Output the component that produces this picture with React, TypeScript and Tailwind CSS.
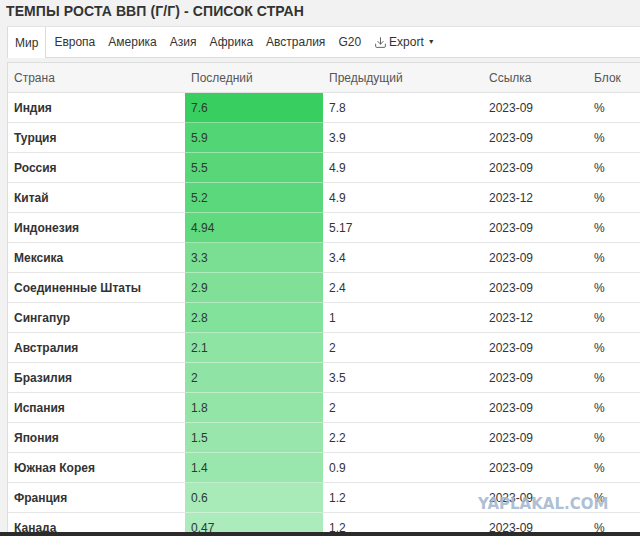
import { Download } from "lucide-react";

const rows = [
  { name: "Индия", last: "7.6", prev: "7.8", ref: "2023-09" },
  { name: "Турция", last: "5.9", prev: "3.9", ref: "2023-09" },
  { name: "Россия", last: "5.5", prev: "4.9", ref: "2023-09" },
  { name: "Китай", last: "5.2", prev: "4.9", ref: "2023-12" },
  { name: "Индонезия", last: "4.94", prev: "5.17", ref: "2023-09" },
  { name: "Мексика", last: "3.3", prev: "3.4", ref: "2023-09" },
  { name: "Соединенные Штаты", last: "2.9", prev: "2.4", ref: "2023-09" },
  { name: "Сингапур", last: "2.8", prev: "1", ref: "2023-12" },
  { name: "Австралия", last: "2.1", prev: "2", ref: "2023-09" },
  { name: "Бразилия", last: "2", prev: "3.5", ref: "2023-09" },
  { name: "Испания", last: "1.8", prev: "2", ref: "2023-09" },
  { name: "Япония", last: "1.5", prev: "2.2", ref: "2023-09" },
  { name: "Южная Корея", last: "1.4", prev: "0.9", ref: "2023-09" },
  { name: "Франция", last: "0.6", prev: "1.2", ref: "2023-09" },
  { name: "Канада", last: "0.47", prev: "1.2", ref: "2023-09" },
];

const tabs = ["Мир", "Европа", "Америка", "Азия", "Африка", "Австралия", "G20"];

// heat colour for the "last" column, light -> strong green
const heat = (v: number) => {
  const t = Math.min(v / 7.6, 1);
  const light = [184, 238, 197];
  const dark = [57, 207, 96];
  const c = light.map((l, i) => Math.round(l + (dark[i] - l) * Math.pow(t, 0.85)));
  return `rgb(${c[0]}, ${c[1]}, ${c[2]})`;
};

export default function App() {
  return (
    <div
      className="relative h-[536px] w-[640px] overflow-hidden bg-[#f2f2f2] flex flex-col text-[#333]"
      style={{ fontFamily: '"Liberation Sans", Arial, sans-serif' }}
    >
      <h1 className="px-[6px] pt-[1px] h-[26px] text-[14px] font-bold leading-[20px] text-[#333] tracking-[0.1px]">
        ТЕМПЫ РОСТА ВВП (Г/Г) - СПИСОК СТРАН
      </h1>

      <div className="ml-[7px] flex h-[32px] items-stretch bg-white border-t border-[#e3e3e3] border-b border-b-[#dcdcdc] text-[12px]">
        {tabs.map((t, i) => (
          <div
            key={t}
            className={
              i === 0
                ? "flex items-center px-[7px] border-x border-[#dcdcdc] bg-white -mb-px text-[#333]"
                : "flex items-center px-[5px] ml-[3px] text-[#333]"
            }
          >
            {t}
          </div>
        ))}
        <div className="flex items-center ml-[8px] gap-[2px] text-[#333]">
          <Download className="w-[13px] h-[13px] text-[#444]" strokeWidth={1.5} />
          <span>Export</span>
          <span className="text-[7px] ml-[2px]">▼</span>
        </div>
      </div>

      <div className="mt-[4px] ml-[7px] flex-1 overflow-hidden bg-white border-l border-t border-[#dedede] text-[12px]">
        <div className="flex h-[30px] items-center bg-[#f6f6f6] border-b border-[#e2e2e2] text-[#555]">
          <div className="w-[177px] pl-[6px]">Страна</div>
          <div className="w-[138px] pl-[6px]">Последний</div>
          <div className="w-[160px] pl-[6px]">Предыдущий</div>
          <div className="w-[105px] pl-[6px]">Ссылка</div>
          <div className="flex-1 pl-[6px]">Блок</div>
        </div>
        {rows.map((r) => (
          <div key={r.name} className="flex h-[30px] items-stretch border-b border-[#e6e6e6]">
            <div className="w-[177px] pl-[6px] flex items-center font-bold text-[#333]">{r.name}</div>
            <div
              className="w-[138px] pl-[6px] flex items-center text-[#2c3a2f] border-b border-white/40 -mb-px"
              style={{ backgroundColor: heat(parseFloat(r.last)) }}
            >
              {r.last}
            </div>
            <div className="w-[160px] pl-[6px] flex items-center">{r.prev}</div>
            <div className="w-[105px] pl-[6px] flex items-center">{r.ref}</div>
            <div className="flex-1 pl-[6px] flex items-center">%</div>
          </div>
        ))}
      </div>

      <div className="h-[4px] bg-[#2b2b2b]" />

      <div
        className="absolute left-[478px] top-[495px] text-[15px] font-bold leading-[18px] text-[#a3b7ce]/90"
        style={{ fontFamily: '"DejaVu Sans", sans-serif' }}
      >
        YAPLAKAL.COM
      </div>
    </div>
  );
}
